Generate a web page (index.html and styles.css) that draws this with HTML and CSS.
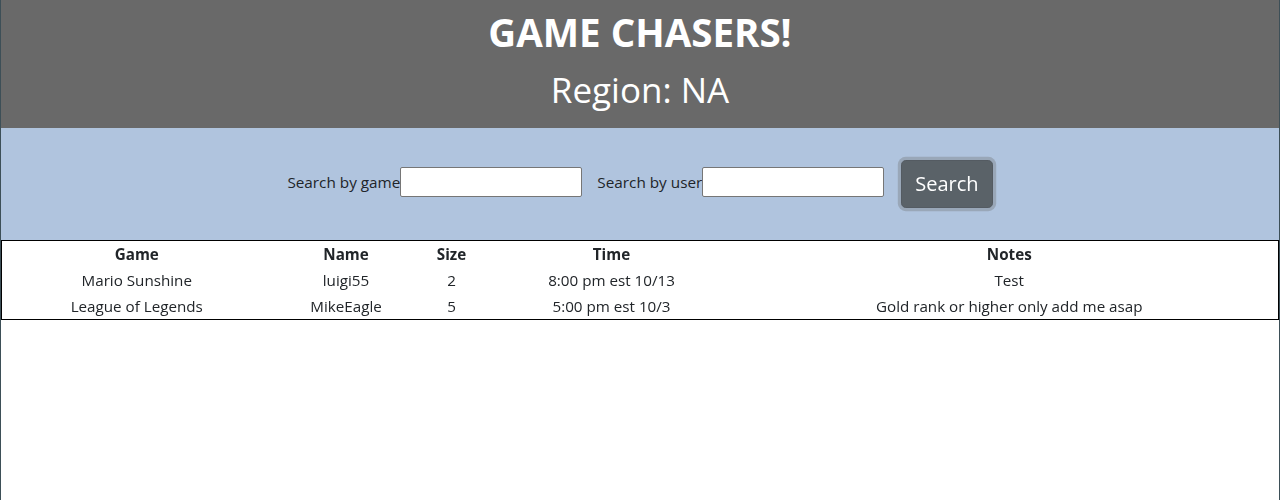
FILE: index.html
```html
<!DOCTYPE html>
<html lang="en">
<head>
<meta charset="utf-8">
<title>Game Chasers</title>
<link rel="stylesheet" href="styles.css">
</head>
<body>
<div class="page">
  <header class="masthead">
    <h1 class="title">GAME CHASERS!</h1>
    <h2 class="region">Region: NA</h2>
  </header>
  <section class="searchbar">
    <label class="field field-game">
      <span class="field-label">Search by game</span>
      <input class="field-input" type="text">
    </label>
    <label class="field field-user">
      <span class="field-label">Search by user</span>
      <input class="field-input" type="text" autofocus>
    </label>
    <button class="search-btn" type="button">Search</button>
  </section>
  <table class="games">
    <colgroup>
      <col class="c-game">
      <col class="c-name">
      <col class="c-size">
      <col class="c-time">
      <col class="c-notes">
    </colgroup>
    <thead>
      <tr><th>Game</th><th>Name</th><th>Size</th><th>Time</th><th>Notes</th></tr>
    </thead>
    <tbody>
      <tr><td>Mario Sunshine</td><td>luigi55</td><td>2</td><td>8:00 pm est 10/13</td><td>Test</td></tr>
      <tr><td>League of Legends</td><td>MikeEagle</td><td>5</td><td>5:00 pm est 10/3</td><td>Gold rank or higher only add me asap</td></tr>
    </tbody>
  </table>
</div>
</body>
</html>
```
FILE: styles.css
```css
* { box-sizing: border-box; }
html, body { margin: 0; padding: 0; }
body {
  font-family: "Open Sans", "Noto Sans", sans-serif;
  font-size: 16px;
  line-height: 1.5;
  color: #212529;
  background: #fff;
}
.page {
  min-height: 500px;
  border-left: 1px solid #3d4f57;
  border-right: 1px solid #3d4f57;
}
.masthead {
  background: #696969;
  color: #fff;
  height: 128px;
  padding-top: 10px;
  text-align: center;
}
.title {
  margin: 0;
  font-size: 38.5px;
  line-height: 44px;
  font-weight: 700;
}
.region {
  margin: 14px 0 0;
  font-size: 35px;
  line-height: 44px;
  font-weight: 400;
}
.searchbar {
  background: #b0c4de;
  height: 112px;
  display: flex;
  align-items: center;
  justify-content: center;
}
.field {
  display: flex;
  align-items: center;
  margin-bottom: 4px;
}
.field-game { margin-right: 15px; }
.field-user { margin-right: 17px; }
.field-label { font-size: 15.3px; }
.field-input {
  width: 182px;
  height: 30px;
  border: 1px solid #767676;
  border-radius: 2px;
  background: #fff;
  font: inherit;
  padding: 1px 3px;
  outline: none;
}
.search-btn {
  font-family: inherit;
  font-size: 20px;
  line-height: 30px;
  padding: 8px 13px;
  color: #fff;
  background: #5a6268;
  border: 1px solid #545b62;
  border-radius: 4.8px;
  box-shadow: 0 0 0 3.2px rgba(130, 138, 145, 0.5);
}
.games {
  width: 100%;
  table-layout: fixed;
  border-collapse: collapse;
  border: 1px solid #000;
  text-align: center;
  font-size: 15.2px;
}
.games th, .games td {
  padding: 1px;
  line-height: 24px;
  white-space: nowrap;
}
.games th { font-weight: 700; }
.c-game { width: 270px; }
.c-name { width: 149px; }
.c-size { width: 62px; }
.c-time { width: 258px; }
.c-notes { width: auto; }
```
